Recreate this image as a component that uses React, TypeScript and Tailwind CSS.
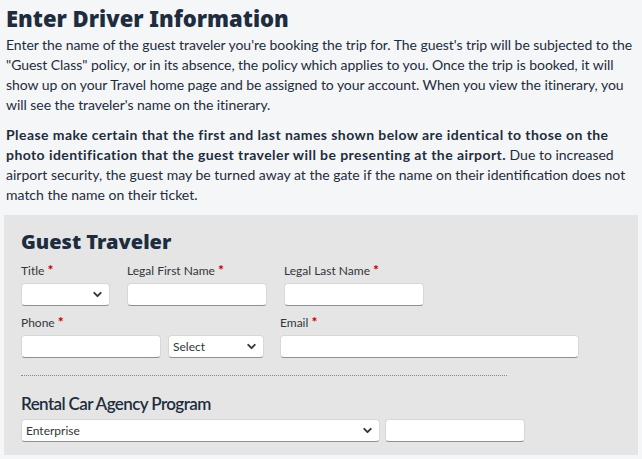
import { ChevronDown } from "lucide-react"

function Label({ text }: { text: string }) {
  return (
    <div className="text-[12px] leading-[16px] text-[#32363a] h-[16px] mb-[5px]">
      {text} <span className="text-[#bb0000] text-[14px] font-bold">*</span>
    </div>
  )
}

function TextBox({ w }: { w: string }) {
  return (
    <div
      className={`${w} h-[23px] bg-white rounded-[4px] border border-[#d5d7d9] border-b-[#89919a]`}
    />
  )
}

function SelectBox({ w, value }: { w: string; value?: string }) {
  return (
    <div
      className={`${w} h-[23px] bg-white rounded-[4px] border border-[#d5d7d9] border-b-[#89919a] flex items-center justify-between pl-[4px] pr-[5px]`}
    >
      <span className="text-[12px] text-[#32363a]">{value}</span>
      <ChevronDown size={13} strokeWidth={3.5} className="text-[#32363a]" />
    </div>
  )
}

const heavy = { fontFamily: "'Noto Sans', Lato, sans-serif" }

export default function App() {
  return (
    <div
      className="min-h-[459px] bg-[#f5f6f7] px-[4px] pt-[3px] pb-[6px] text-[#1d2d3e]"
      style={{ fontFamily: "Lato, 'Noto Sans', sans-serif" }}
    >
      <div className="px-[2px]">
        <h1 className="text-[22px] leading-[30px] font-black text-[#1d2d3e]" style={heavy}>
          Enter Driver Information
        </h1>
        <p className="text-[14px] leading-[20px] mt-[2px] tracking-[-0.05px]">
          Enter the name of the guest traveler you're booking the trip for. The guest's trip will be subjected to the
          <br />
          "Guest Class" policy, or in its absence, the policy which applies to you. Once the trip is booked, it will
          <br />
          show up on your Travel home page and be assigned to your account. When you view the itinerary, you
          <br />
          will see the traveler's name on the itinerary.
        </p>
        <p className="text-[14px] leading-[20px] mt-[10px]">
          <b className="font-bold tracking-[0.43px]">
            Please make certain that the first and last names shown below are identical to those on the
            <br />
            photo identification that the guest traveler will be presenting at the airport.
          </b>{" "}
          Due to increased
          <br />
          airport security, the guest may be turned away at the gate if the name on their identification does not
          <br />
          match the name on their ticket.
        </p>
      </div>

      <div className="mt-[10px] bg-[#e5e5e5] px-[17px] pt-[15px] pb-[13px]">
        <h2 className="text-[20px] leading-[24px] font-black text-[#1d2d3e]" style={heavy}>
          Guest Traveler
        </h2>

        <div className="flex mt-[8px]">
          <div className="w-[106px]">
            <Label text="Title" />
            <SelectBox w="w-[89px]" />
          </div>
          <div className="w-[157px]">
            <Label text="Legal First Name" />
            <TextBox w="w-[140px]" />
          </div>
          <div>
            <Label text="Legal Last Name" />
            <TextBox w="w-[140px]" />
          </div>
        </div>

        <div className="flex mt-[8px]">
          <div className="w-[259px]">
            <Label text="Phone" />
            <div className="flex gap-[7px]">
              <TextBox w="w-[140px]" />
              <SelectBox w="w-[96px]" value="Select" />
            </div>
          </div>
          <div>
            <Label text="Email" />
            <TextBox w="w-[299px]" />
          </div>
        </div>

        <div className="mt-[17px] w-[486px] border-t border-dotted border-[#8a8a8a]" />

        <h2 className="mt-[17px] text-[17px] leading-[22px] font-semibold tracking-[-0.6px] text-[#1d2d3e]">
          Rental Car Agency Program
        </h2>
        <div className="flex gap-[5px] mt-[4px]">
          <SelectBox w="w-[359px]" value="Enterprise" />
          <TextBox w="w-[140px]" />
        </div>
      </div>
    </div>
  )
}
